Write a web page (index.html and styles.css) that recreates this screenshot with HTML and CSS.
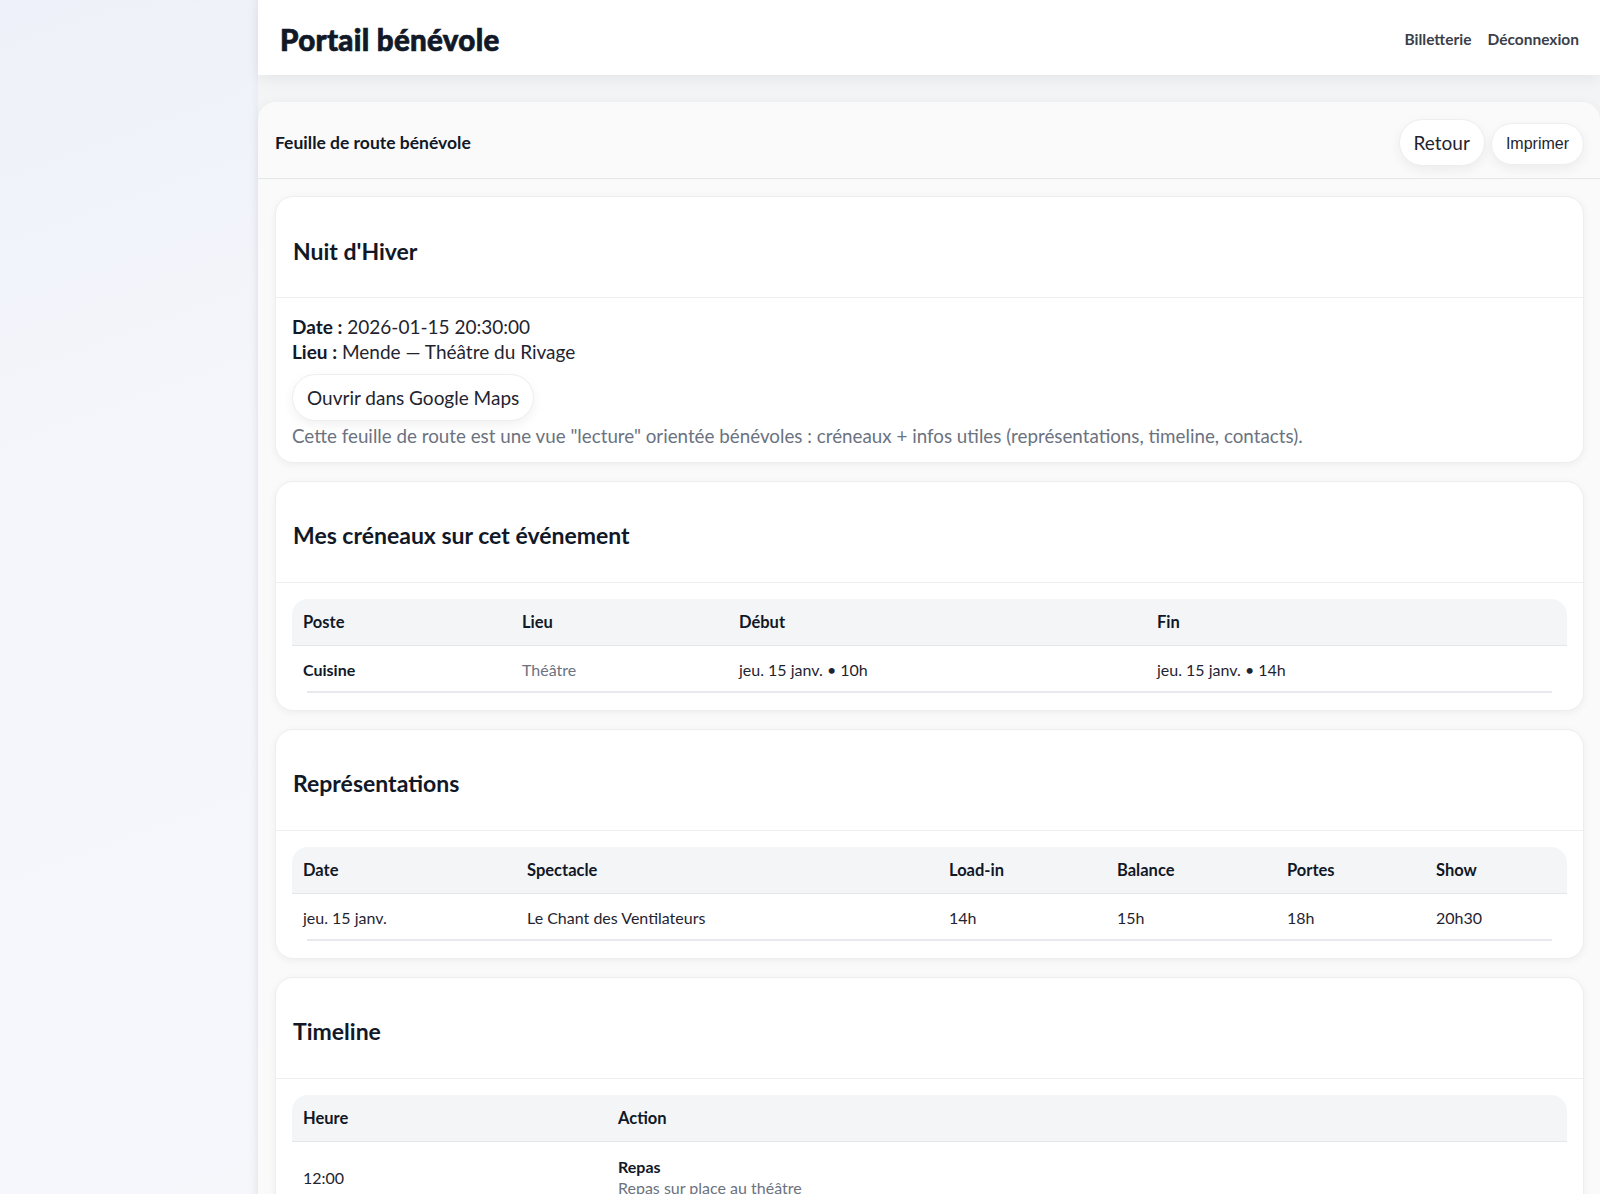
FILE: index.html
```html
<!DOCTYPE html>
<html lang="fr">
<head>
	<meta charset="UTF-8">
	<title>Feuille de route bénévole</title>
	<link rel="stylesheet" href="styles.css">
</head>
<body>
	<div class="layout">
		<aside class="side"></aside>
		<div class="main">
			<header class="topbar">
				<h1 class="brand">Portail bénévole</h1>
				<nav class="nav">
					<a href="#">Billetterie</a>
					<a href="#">Déconnexion</a>
				</nav>
			</header>

			<div class="sheet">
				<div class="sheetHead">
					<div class="sheetTitle">Feuille de route bénévole</div>
					<div class="actions">
						<button class="btn btnBack">Retour</button>
						<button class="btn btnPrint">Imprimer</button>
					</div>
				</div>

				<div class="sheetBody">
					<section class="card">
						<div class="cardHead"><h2>Nuit d'Hiver</h2></div>
						<div class="cardBody info">
							<div><b>Date :</b> 2026-01-15 20:30:00</div>
							<div><b>Lieu :</b> Mende — Théâtre du Rivage</div>
							<button class="btn btnMaps">Ouvrir dans Google Maps</button>
							<div class="muted">Cette feuille de route est une vue "lecture" orientée bénévoles : créneaux + infos utiles (représentations, timeline, contacts).</div>
						</div>
					</section>

					<section class="card">
						<div class="cardHead"><h2>Mes créneaux sur cet événement</h2></div>
						<div class="cardBody">
							<table class="tbl">
								<thead>
									<tr><th class="w219">Poste</th><th class="w217">Lieu</th><th class="w418">Début</th><th>Fin</th></tr>
								</thead>
								<tbody>
									<tr><td><b>Cuisine</b></td><td class="grey">Théâtre</td><td>jeu. 15 janv. • 10h</td><td>jeu. 15 janv. • 14h</td></tr>
								</tbody>
							</table>
						</div>
					</section>

					<section class="card">
						<div class="cardHead"><h2>Représentations</h2></div>
						<div class="cardBody">
							<table class="tbl">
								<thead>
									<tr><th class="w224">Date</th><th class="w422">Spectacle</th><th class="w168">Load-in</th><th class="w170">Balance</th><th class="w149">Portes</th><th>Show</th></tr>
								</thead>
								<tbody>
									<tr><td>jeu. 15 janv.</td><td>Le Chant des Ventilateurs</td><td>14h</td><td>15h</td><td>18h</td><td>20h30</td></tr>
								</tbody>
							</table>
						</div>
					</section>

					<section class="card">
						<div class="cardHead"><h2>Timeline</h2></div>
						<div class="cardBody">
							<table class="tbl">
								<thead>
									<tr><th class="w315">Heure</th><th>Action</th></tr>
								</thead>
								<tbody>
									<tr><td>12:00</td><td class="twoLines"><b>Repas</b><div class="grey">Repas sur place au théâtre</div></td></tr>
								</tbody>
							</table>
						</div>
					</section>
				</div>
			</div>
		</div>
	</div>
</body>
</html>
```

FILE: styles.css
```css
*{
	padding: 0;
	margin: 0;
	box-sizing: border-box;
}
html, body{
	height: 100%;
	overflow: hidden;
}
body{
	font-family: Lato, "Noto Sans", sans-serif;
	color: #1f2430;
	background-color: #f5f6f8;
}
.layout{
	display: grid;
	grid-template-columns: 258px 1fr;
	min-height: 100%;
}
.side{
	background: linear-gradient(160deg, #eef1f9 0%, #f4f6fb 40%, #f5f7fb 100%);
	box-shadow: inset -6px 0 10px -6px rgba(0,0,0,.06);
}
.main{
	background-color: #f3f4f6;
}

/* barre du haut */
.topbar{
	height: 75px;
	background-color: #fff;
	display: flex;
	align-items: center;
	justify-content: space-between;
	padding: 3px 21px 0 22px;
	box-shadow: 0 4px 14px rgba(0,0,0,.06);
	position: relative;
}
.brand{
	font-size: 29.5px;
	font-weight: 900;
	color: #111827;
	letter-spacing: 0.3px;
	-webkit-text-stroke: 0.7px #111827;
}
.nav{
	display: flex;
	gap: 16px;
}
.nav a{
	font-size: 15.5px;
	font-weight: 700;
	color: #3b3f4a;
	text-decoration: none;
}

/* feuille */
.sheet{
	margin-top: 27px;
	background-color: #fafafa;
	border-radius: 18px 18px 0 0;
	box-shadow: 0 2px 12px rgba(0,0,0,.05);
	min-height: 1100px;
}
.sheetHead{
	height: 77px;
	display: flex;
	align-items: center;
	justify-content: space-between;
	padding: 5px 16px 0 17px;
	border-bottom: 1px solid #e6e7ea;
}
.sheetTitle{
	font-size: 17.5px;
	font-weight: 700;
	color: #111827;
}
.actions{
	display: flex;
	align-items: center;
	gap: 6px;
}
.btn{
	background-color: #fff;
	border: 1px solid #eceef1;
	border-radius: 999px;
	box-shadow: 0 4px 12px rgba(0,0,0,.06);
	color: #1f2430;
	cursor: pointer;
}
.btnBack{
	font-family: Lato, "Noto Sans", sans-serif;
	font-size: 19px;
	height: 47px;
	padding: 0 14px;
}
.btnPrint{
	font-family: "Liberation Sans", Arial, sans-serif;
	font-size: 16px;
	height: 42px;
	padding: 0 14px;
	margin-top: 2px;
}
.sheetBody{
	padding: 17px 16px 0 17px;
	display: flex;
	flex-direction: column;
	gap: 18px;
}

/* cartes */
.card{
	background-color: #fff;
	border: 1px solid #eceef1;
	border-radius: 18px;
	box-shadow: 0 2px 8px rgba(0,0,0,.05);
}
.cardHead{
	height: 101px;
	display: flex;
	align-items: center;
	padding: 7px 17px 0;
	border-bottom: 1px solid #eceef0;
}
.cardHead h2{
	font-size: 23px;
	font-weight: 700;
	color: #111827;
}
.cardBody{
	padding: 16px 16px 17px 16px;
}
.info{
	font-size: 19px;
	line-height: 24.5px;
	padding-top: 17px;
	padding-bottom: 13px;
}
.info b{
	color: #111827;
}
.btnMaps{
	font-family: Lato, "Noto Sans", sans-serif;
	font-size: 19px;
	height: 47px;
	padding: 0 14px;
	margin-top: 10px;
	display: block;
}
.muted{
	color: #6b7280;
	margin-top: 3px;
	font-size: 18.8px;
}

/* tableaux */
.tbl{
	width: 100%;
	border-collapse: collapse;
	font-size: 16px;
	text-align: left;
}
.tbl thead tr{
	background-color: #f4f5f7;
}
.tbl th{
	height: 47px;
	padding: 0 11px;
	font-size: 16.5px;
	font-weight: 700;
	color: #111827;
	border-bottom: 1px solid #e4e6ea;
}
.tbl th:first-child{
	border-top-left-radius: 16px;
}
.tbl th:last-child{
	border-top-right-radius: 16px;
}
.tbl tbody tr{
	background: linear-gradient(#e8e9ec, #e8e9ec) no-repeat center bottom / calc(100% - 30px) 2px;
}
.tbl td{
	height: 47px;
	padding: 0 11px;
	color: #1f2430;
	vertical-align: middle;
}
.tbl td b{
	color: #111827;
}
.tbl .grey, .grey{
	color: #6b7280;
}
.tbl .twoLines{
	padding-top: 14px;
	padding-bottom: 14px;
	line-height: 21px;
}
.w219{ width: 219px; }
.w217{ width: 217px; }
.w418{ width: 418px; }
.w224{ width: 224px; }
.w422{ width: 422px; }
.w168{ width: 168px; }
.w170{ width: 170px; }
.w149{ width: 149px; }
.w315{ width: 315px; }
```
